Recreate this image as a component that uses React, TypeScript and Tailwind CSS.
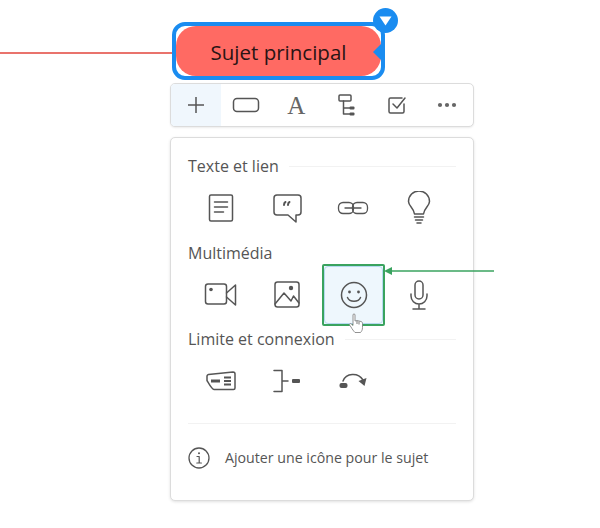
const S = { fill: "none", stroke: "#555", strokeWidth: 1.5, strokeLinecap: "round" as const, strokeLinejoin: "round" as const };

function Ico({ w = 32, h = 32, children }: { w?: number; h?: number; children: React.ReactNode }) {
  return <svg width={w} height={h} viewBox={`0 0 ${w} ${h}`} {...S}>{children}</svg>;
}

const IconDoc = () => <Ico><rect x="4.500" y="3" width="23" height="26" rx="1.500" /><path d="M9.500 10h13M9.500 15h13M9.500 20h9" /></Ico>;
const IconQuote = () => <Ico><path d="M6 3h21a3 3 0 0 1 3 3v14a3 3 0 0 1-3 3h-2v7l-8-7H6a3 3 0 0 1-3-3V6a3 3 0 0 1 3-3z" /><path d="M13 13c0-1.500.5-2.500 1.500-3M17 13c0-1.500.5-2.500 1.500-3" strokeWidth="2" /></Ico>;
const IconLink = () => <Ico h={14}><rect x="1.500" y="1.500" width="15" height="11" rx="4.500" strokeWidth="1.300" /><rect x="15.500" y="1.500" width="15" height="11" rx="4.500" strokeWidth="1.300" /><path d="M8 7h16" strokeWidth="1.300" /></Ico>;
const IconBulb = () => <Ico w={24} h={34}><path d="M7.500 23C7 17 1.500 15 1.500 10.500a10.500 10.500 0 0 1 21 0C22.500 15 17 17 16.500 23z" /><path d="M7.500 26h9M8.500 29h7M10 32h4" /></Ico>;
const IconVideo = () => <Ico w={34}><rect x="1.500" y="5" width="21" height="20" rx="2.500" /><path d="M22.500 14l9-8v20l-9-8" /><circle cx="7" cy="10.500" r="1.800" fill="#555" stroke="none" /></Ico>;
const IconImage = () => <Ico w={28}><rect x="2" y="3" width="24" height="25" rx="2.500" /><path d="M2 25l9-11 7 8 2.500-5 5.500 7" /><circle cx="18" cy="9" r="2.200" fill="#555" stroke="none" /></Ico>;
const IconSmile = () => <Ico w={28} h={28}><circle cx="14" cy="14" r="12.500" /><circle cx="9.500" cy="11" r="1.400" fill="#555" stroke="none" /><circle cx="18.500" cy="11" r="1.400" fill="#555" stroke="none" /><path d="M7.500 16.500c2 5 11 5 13 0" /></Ico>;
const IconMic = () => <Ico w={20} h={30}><rect x="6" y="1" width="8" height="18" rx="4" /><path d="M2 14v2a8 8 0 0 0 16 0v-2M10 24v5M4 29h12" /></Ico>;
const IconBoundary = () => <Ico w={30} h={20}><path d="M2.500 3.500L27 1a2 2 0 0 1 2 2v14a1.500 1.500 0 0 1-1.500 1.500H8C6 18.500 2.500 12 1 9.500V5a2 2 0 0 1 1.500-1.500z" /><path d="M5 10h9" strokeWidth="3" strokeLinecap="butt" /><path d="M18 6.500h7M18 10h7M18 13.500h7" strokeWidth="1.800" strokeLinecap="butt" /></Ico>;
const IconSummary = () => <Ico w={28} h={24}><path d="M1 1.500h8v21H1M9 12h6" /><rect x="19" y="10" width="8" height="4" rx="1" fill="#555" stroke="none" /></Ico>;
const IconRelation = () => <Ico w={28} h={16}><path d="M4 8C7 0 19-1 24 7" /><path d="M27.500 5l-2 8-6-5z" fill="#555" stroke="none" /><rect x="0.500" y="10" width="8" height="5" rx="2" fill="#555" stroke="none" /></Ico>;

const IconRect = () => <Ico w={28} h={16}><rect x="1.500" y="1.500" width="25" height="13" rx="3.500" /></Ico>;
const IconTree = () => <Ico w={17} h={22}><rect x="1" y="1" width="12" height="6" rx="1" /><path d="M5.500 7v13h6M5.500 14h6" /><rect x="11.500" y="12.500" width="5" height="3" rx="1" fill="#555" stroke="none" /><rect x="11.500" y="18.500" width="5" height="3" rx="1" fill="#555" stroke="none" /></Ico>;
const IconCheck = () => <Ico w={20} h={20}><path d="M15 3H3.500A1.500 1.500 0 0 0 2 4.500v12A1.500 1.500 0 0 0 3.500 18h12a1.500 1.500 0 0 0 1.500-1.500V9" /><path d="M6 9l4 4 8-10" /></Ico>;
const IconInfo = () => <Ico w={22} h={22}><circle cx="11" cy="11" r="10" strokeWidth="1.300" /><path d="M9 9.500h2.200V16M8.800 16h4.600" strokeWidth="1.200" /><circle cx="11" cy="6.300" r="1" fill="#555" stroke="none" /></Ico>;

function Section({ title, line, children }: { title: string; line?: boolean; children: React.ReactNode }) {
  return (
    <div className="mb-[2.500px]">
      <div className="flex h-[22px] items-center gap-2.5">
        <span className="text-[16px] leading-[22px] text-[#555]">{title}</span>
        {line && <span className="h-px flex-1 bg-[#f2f2f2]" />}
      </div>
      <div className="grid h-[62px] grid-cols-[66px_66px_66px_66px]">
        {children}
      </div>
    </div>
  );
}

const Cell = ({ children, active }: { children?: React.ReactNode; active?: boolean }) => (
  <div className={`flex items-center justify-center ${active ? "ml-[2px] mr-[1px] rounded-[3px] bg-[#eef7fd]" : ""}`}>{children}</div>
);

const ToolItem = ({ children, active }: { children: React.ReactNode; active?: boolean }) => (
  <div className={`flex h-full w-[50.500px] items-center justify-center pr-[1px] ${active ? "bg-[#f0f7fd]" : ""}`}>{children}</div>
);

export default function App() {
  return (
    <div className="relative h-[528px] w-[600px] overflow-hidden bg-white pl-[170px] pt-[22px] font-['Open_Sans',sans-serif]">
      {/* connector to parent topic */}
      <div className="absolute left-0 top-[52px] h-[2px] w-[174px] bg-[#e9736c]" />

      {/* topic */}
      <div className="relative ml-[2px] h-[58px] w-[213px] rounded-[13px] border-[4px] border-[#1a8cf0] bg-white">
        <div className="flex h-full w-full items-center justify-center rounded-[20px] bg-[#ff6a63] pt-[2px] text-[20.500px] text-[#2a1414]">
          Sujet principal
        </div>
        <div className="absolute right-[-17px] top-[-18px] flex h-[25px] w-[25px] items-center justify-center rounded-full bg-[#1a8cf0]">
          <svg width="13" height="10" viewBox="0 0 13 10"><path d="M0.500 0.500h12L6.500 9.500z" fill="#fff" /></svg>
        </div>
        <div className="absolute right-0 top-[18px] h-0 w-0 border-y-[8px] border-r-[8px] border-y-transparent border-r-[#1a8cf0]" />
      </div>

      {/* toolbar */}
      <div className="mt-[3px] flex h-[44px] w-[304px] items-center overflow-hidden rounded-[5px] border border-[#dcdcdc] bg-white shadow-[0_1px_2px_rgba(0,0,0,0.08)]">
        <ToolItem active>
          <svg width="18" height="18" viewBox="0 0 18 18" fill="none" stroke="#555" strokeWidth="1.500"><path d="M9 1v16M1 9h16" /></svg>
        </ToolItem>
        <ToolItem><IconRect /></ToolItem>
        <ToolItem><span className="font-['Liberation_Serif',serif] text-[25px] leading-none text-[#666]">A</span></ToolItem>
        <ToolItem><IconTree /></ToolItem>
        <ToolItem><IconCheck /></ToolItem>
        <ToolItem>
          <svg width="20" height="6" viewBox="0 0 20 6" fill="#666"><circle cx="3" cy="3" r="2.100" /><circle cx="10" cy="3" r="2.100" /><circle cx="17" cy="3" r="2.100" /></svg>
        </ToolItem>
      </div>

      {/* panel */}
      <div className="mt-[10px] h-[364px] w-[304px] rounded-[5px] border border-[#dcdcdc] bg-white px-[17px] pt-[17px] shadow-[0_1px_3px_rgba(0,0,0,0.12)]">
        <Section title="Texte et lien" line>
          <Cell><IconDoc /></Cell>
          <Cell><IconQuote /></Cell>
          <Cell><IconLink /></Cell>
          <Cell><IconBulb /></Cell>
        </Section>
        <Section title="Multimédia">
          <Cell><IconVideo /></Cell>
          <Cell><IconImage /></Cell>
          <Cell active><IconSmile /></Cell>
          <Cell><IconMic /></Cell>
        </Section>
        <Section title="Limite et connexion" line>
          <Cell><IconBoundary /></Cell>
          <Cell><IconSummary /></Cell>
          <Cell><IconRelation /></Cell>
          <Cell />
        </Section>
        <div className="mt-[10.500px] h-px bg-[#f2f2f2]" />
        <div className="mt-[23px] flex items-center gap-[15px]">
          <IconInfo />
          <span className="text-[14.200px] text-[#555]">Ajouter une icône pour le sujet</span>
        </div>
      </div>

      {/* annotation: green frame, arrow and pointer */}
      <div className="absolute left-[322px] top-[264px] h-[62px] w-[63px] rounded-[2px] border-[2px] border-[#3aa35f]">
        <div className="h-full w-full rounded-[4px] border border-[#b5d9f0]" />
      </div>
      <svg className="absolute left-[383px] top-[265px]" width="112" height="12" viewBox="0 0 112 12">
        <path d="M8 6h103" stroke="#3aa35f" strokeWidth="1.500" />
        <path d="M1 6l8-4v8z" fill="#3aa35f" />
      </svg>
      <svg className="absolute left-[348px] top-[313px]" width="16" height="21" viewBox="0 0 16 21" fill="#fff" stroke="#777" strokeWidth="0.800" strokeLinejoin="round">
        <path d="M5 2c0-1.500 2-1.500 2 0v6l2-.500 2 .500 2 .500c1 .200 1.500 1 1.500 2v4c0 2.500-1 4-2 5H7c-1-1-3-3.500-4-5.500l-1.500-2c-.500-1 .700-2 1.800-1L5 12.500z" />
        <path d="M9 8v3M11 8.500v3" stroke="#555" fill="none" />
      </svg>
    </div>
  );
}
